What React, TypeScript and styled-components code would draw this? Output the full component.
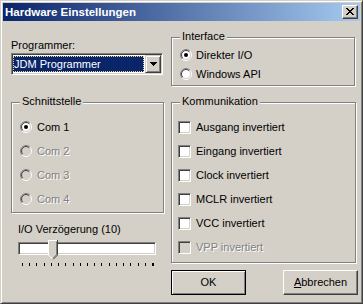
import React from "react";
import styled, { createGlobalStyle } from "styled-components";

const FACE = "#D4D0C8";
const SHADOW = "#808080";
const DARK = "#404040";

const GlobalStyle = createGlobalStyle`
  html, body { margin: 0; padding: 0; background: ${FACE}; }
  body {
    font-family: "Liberation Sans", Arial, sans-serif;
    font-size: 11px;
    line-height: 13px;
    color: #000;
  }
  * { box-sizing: border-box; }
`;

const Window = styled.div`
  width: 363px;
  height: 304px;
  background: ${FACE};
  border: 1px solid;
  border-color: ${FACE} ${DARK} ${DARK} ${FACE};
  box-shadow: inset 1px 1px #fff, inset -1px -1px ${SHADOW};
  padding: 2px;
  display: flex;
  flex-direction: column;
`;

const TitleBar = styled.div`
  height: 18px;
  flex: none;
  display: flex;
  align-items: center;
  padding: 0 2px;
  background: linear-gradient(to right, #0a246a, #a6caf0);
`;

const Title = styled.div`
  flex: 1;
  color: #fff;
  font-weight: bold;
  font-size: 11.5px;
  line-height: 14px;
`;

const CaptionButton = styled.div`
  width: 16px;
  height: 14px;
  background: ${FACE};
  border: 1px solid;
  border-color: #fff ${DARK} ${DARK} #fff;
  box-shadow: inset -1px -1px ${SHADOW};
  display: flex;
  align-items: center;
  justify-content: center;
  padding-bottom: 1px;
`;

const Body = styled.div`
  flex: 1;
  display: flex;
  gap: 7px;
  padding-left: 8px;
`;

const Column = styled.div<{ $w: number }>`
  width: ${(p) => p.$w}px;
  display: flex;
  flex-direction: column;
  align-items: flex-start;
`;

const FieldLabel = styled.div<{ $mt: number; $ml?: number }>`
  margin-top: ${(p) => p.$mt}px;
  margin-left: ${(p) => p.$ml ?? 0}px;
  line-height: 13px;
  white-space: nowrap;
`;

const Combo = styled.div`
  margin-top: 1px;
  width: 152px;
  height: 22px;
  background: #fff;
  border: 1px solid;
  border-color: ${SHADOW} #fff #fff ${SHADOW};
  box-shadow: inset 1px 1px ${DARK}, inset -1px -1px ${FACE};
  padding: 1px;
  display: flex;
`;

const ComboValue = styled.div`
  flex: 1;
  margin: 1px 1px 1px 0;
  background: #0a246a;
  color: #fff;
  padding-left: 1px;
  line-height: 16px;
  outline: 1px dotted #e8d890;
  outline-offset: -1px;
  white-space: nowrap;
`;

const ComboButton = styled.div`
  width: 16px;
  flex: none;
  background: ${FACE};
  border: 1px solid;
  border-color: ${FACE} ${DARK} ${DARK} ${FACE};
  box-shadow: inset 1px 1px #fff, inset -1px -1px ${SHADOW};
  display: flex;
  align-items: center;
  justify-content: center;
`;

const Group = styled.div<{
  $w: number;
  $h: number;
  $mt: number;
  $pt: number;
  $pl: number;
  $gap: number;
}>`
  position: relative;
  width: ${(p) => p.$w}px;
  height: ${(p) => p.$h}px;
  margin-top: ${(p) => p.$mt}px;
  border: 1px solid ${SHADOW};
  box-shadow: inset 1px 1px #fff, 1px 1px #fff;
  padding: ${(p) => p.$pt}px 0 0 ${(p) => p.$pl}px;
  display: flex;
  flex-direction: column;
  gap: ${(p) => p.$gap}px;
`;

const Legend = styled.span`
  position: absolute;
  top: -8px;
  left: 8px;
  padding: 0 2px;
  background: ${FACE};
  line-height: 13px;
  white-space: nowrap;
`;

const Option = styled.div<{ $disabled?: boolean; $h: number; $gap: number }>`
  display: flex;
  align-items: center;
  height: ${(p) => p.$h}px;
  gap: ${(p) => p.$gap}px;
  white-space: nowrap;
  color: ${(p) => (p.$disabled ? SHADOW : "#000")};
  text-shadow: ${(p) => (p.$disabled ? "1px 1px 0 #fff" : "none")};
`;

const CheckBox = styled.span<{ $disabled?: boolean }>`
  width: 13px;
  height: 13px;
  flex: none;
  background: ${(p) => (p.$disabled ? FACE : "#fff")};
  border: 1px solid;
  border-color: ${SHADOW} #fff #fff ${SHADOW};
  box-shadow: inset 1px 1px ${DARK}, inset -1px -1px ${FACE};
`;

const Slider = styled.div`
  position: relative;
  margin-top: 4px;
  margin-left: 7px;
  width: 138px;
`;

const Track = styled.div`
  margin-top: 2px;
  height: 13px;
  background: #fff;
  border: 1px solid;
  border-color: ${SHADOW} #fff #fff ${SHADOW};
  box-shadow: inset 1px 1px ${DARK}, inset -1px -1px ${FACE};
`;

const Thumb = styled.svg`
  position: absolute;
  top: 0;
  display: block;
`;

const Ticks = styled.svg`
  display: block;
  margin-top: 8px;
`;

const ButtonRow = styled.div`
  margin-top: 7px;
  width: 187px;
  display: flex;
  justify-content: space-between;
`;

const PushButton = styled.button<{ $default?: boolean }>`
  width: 75px;
  height: 25px;
  padding: 0;
  margin: 0;
  font-family: inherit;
  font-size: 11px;
  line-height: 13px;
  color: #000;
  background: ${FACE};
  border: 1px solid;
  border-color: ${(p) => (p.$default ? "#000" : `#fff ${DARK} ${DARK} #fff`)};
  box-shadow: ${(p) =>
    p.$default
      ? `inset 1px 1px #fff, inset -1px -1px ${SHADOW}`
      : `inset -1px -1px ${SHADOW}`};
`;

const CloseGlyph = () => (
  <svg width="8" height="7" viewBox="0 0 8 7" shapeRendering="crispEdges">
    <g fill="#000">
      <rect x="0" y="0" width="2" height="1" />
      <rect x="6" y="0" width="2" height="1" />
      <rect x="1" y="1" width="2" height="1" />
      <rect x="5" y="1" width="2" height="1" />
      <rect x="2" y="2" width="4" height="1" />
      <rect x="3" y="3" width="2" height="1" />
      <rect x="2" y="4" width="4" height="1" />
      <rect x="1" y="5" width="2" height="1" />
      <rect x="5" y="5" width="2" height="1" />
      <rect x="0" y="6" width="2" height="1" />
      <rect x="6" y="6" width="2" height="1" />
    </g>
  </svg>
);

const DownArrow = () => (
  <svg width="7" height="4" viewBox="0 0 7 4" shapeRendering="crispEdges">
    <path d="M0 0H7V1H6V2H5V3H4V4H3V3H2V2H1V1H0Z" fill="#000" />
  </svg>
);

const arc = (r: number, first: boolean) => {
  const d = r * Math.SQRT1_2;
  const x1 = 6 - d;
  const y1 = 6 + d;
  const x2 = 6 + d;
  const y2 = 6 - d;
  return first
    ? `M${x1} ${y1}A${r} ${r} 0 0 1 ${x2} ${y2}`
    : `M${x2} ${y2}A${r} ${r} 0 0 1 ${x1} ${y1}`;
};

const RadioIcon = ({ checked, disabled }: { checked?: boolean; disabled?: boolean }) => (
  <svg width="12" height="12" viewBox="0 0 12 12" style={{ flex: "none" }}>
    <circle cx="6" cy="6" r="4.5" fill={disabled ? FACE : "#fff"} />
    <path d={arc(5.5, true)} stroke={SHADOW} fill="none" />
    <path d={arc(5.5, false)} stroke="#fff" fill="none" />
    <path d={arc(4.5, true)} stroke={DARK} fill="none" />
    <path d={arc(4.5, false)} stroke={FACE} fill="none" />
    {checked && <circle cx="6" cy="6" r="2" fill="#000" />}
  </svg>
);

const ThumbShape = ({ left }: { left: number }) => (
  <Thumb width="10" height="21" viewBox="0 0 10 21" style={{ left }}>
    <polygon points="0,0 10,0 10,15 5,20 0,15" fill={FACE} />
    <path d="M0.5 15V0.5H9" stroke="#fff" fill="none" />
    <path d="M0.5 15L5 19.5" stroke="#fff" fill="none" />
    <path d="M9.5 0V15L5 19.5" stroke={DARK} fill="none" />
    <path d="M8.5 1.5V14.6L5 18.2" stroke={SHADOW} fill="none" />
  </Thumb>
);

const TickMarks = () => {
  const xs: number[] = [];
  for (let i = 0; i <= 18; i++) xs.push(4 + Math.round((i * 130) / 18));
  xs.push(135);
  return (
    <Ticks width="138" height="3" viewBox="0 0 138 3" shapeRendering="crispEdges">
      {xs.map((x, i) => (
        <rect key={i} x={x} y={0} width={1} height={3} fill="#000" />
      ))}
    </Ticks>
  );
};

const comPorts = [
  { label: "Com 1", checked: true, disabled: false },
  { label: "Com 2", checked: false, disabled: true },
  { label: "Com 3", checked: false, disabled: true },
  { label: "Com 4", checked: false, disabled: true },
];

const commOptions = [
  { label: "Ausgang invertiert", disabled: false },
  { label: "Eingang invertiert", disabled: false },
  { label: "Clock invertiert", disabled: false },
  { label: "MCLR invertiert", disabled: false },
  { label: "VCC invertiert", disabled: false },
  { label: "VPP invertiert", disabled: true },
];

export default function App() {
  const delay = 10;
  return (
    <>
      <GlobalStyle />
      <Window>
        <TitleBar>
          <Title>Hardware Einstellungen</Title>
          <CaptionButton>
            <CloseGlyph />
          </CaptionButton>
        </TitleBar>
        <Body>
          <Column $w={153}>
            <FieldLabel $mt={18}>Programmer:</FieldLabel>
            <Combo>
              <ComboValue>JDM Programmer</ComboValue>
              <ComboButton>
                <DownArrow />
              </ComboButton>
            </Combo>
            <Group $w={153} $h={111} $mt={27} $pt={18} $pl={8} $gap={12}>
              <Legend>Schnittstelle</Legend>
              {comPorts.map((c) => (
                <Option key={c.label} $h={12} $gap={5} $disabled={c.disabled}>
                  <RadioIcon checked={c.checked} disabled={c.disabled} />
                  {c.label}
                </Option>
              ))}
            </Group>
            <FieldLabel $mt={10} $ml={7}>
              I/O Verzögerung ({delay})
            </FieldLabel>
            <Slider>
              <Track />
              <ThumbShape left={30} />
              <TickMarks />
            </Slider>
          </Column>
          <Column $w={187}>
            <Group $w={184} $h={49} $mt={16} $pt={11} $pl={8} $gap={7}>
              <Legend>Interface</Legend>
              <Option $h={12} $gap={4}>
                <RadioIcon checked />
                Direkter I/O
              </Option>
              <Option $h={12} $gap={4}>
                <RadioIcon />
                Windows API
              </Option>
            </Group>
            <Group $w={185} $h={161} $mt={16} $pt={18} $pl={6} $gap={11}>
              <Legend>Kommunikation</Legend>
              {commOptions.map((o) => (
                <Option key={o.label} $h={13} $gap={5} $disabled={o.disabled}>
                  <CheckBox $disabled={o.disabled} />
                  {o.label}
                </Option>
              ))}
            </Group>
            <ButtonRow>
              <PushButton $default>OK</PushButton>
              <PushButton>
                <u>A</u>bbrechen
              </PushButton>
            </ButtonRow>
          </Column>
        </Body>
      </Window>
    </>
  );
}
